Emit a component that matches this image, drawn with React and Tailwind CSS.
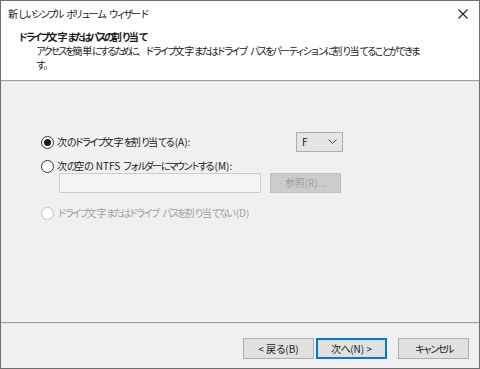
import React from "react";

function cat(ch) {
  if (ch === "ー") return "l";
  if (/[\u3040-\u30ff]/.test(ch)) return "k";
  if (/[\u3000-\u303f\uff00-\uffef]/.test(ch)) return "p";
  if (/[\u4e00-\u9fff]/.test(ch)) return "h";
  return "o";
}

const CLS = {
  k: "tracking-[-2.6px]",
  l: "tracking-[-1.3px]",
  p: "tracking-[-1.8px]",
  h: "tracking-[-0.2px]",
  o: "tracking-[0px]",
  oAfterKana: "ml-[2px] tracking-[0px]",
};

function JP({ children }) {
  const text = String(children);
  const runs = [];
  for (const ch of text) {
    const c = cat(ch);
    const last = runs[runs.length - 1];
    if (last && last.c === c) last.t += ch;
    else runs.push({ c, t: ch });
  }
  return (
    <span className="whitespace-nowrap">
      {runs.map((r, i) => {
        const prev = runs[i - 1];
        const cls =
          r.c === "o" && prev && (prev.c === "k" || prev.c === "l" || prev.c === "p")
            ? CLS.oAfterKana
            : CLS[r.c];
        return (
          <span key={i} className={cls}>
            {r.t}
          </span>
        );
      })}
    </span>
  );
}

function Radio({ checked, disabled }) {
  return (
    <span
      className={`flex h-[13px] w-[13px] shrink-0 items-center justify-center rounded-full border bg-white ${
        disabled ? "border-[#c4c4c4]" : "border-[#333333]"
      }`}
    >
      {checked && <span className="h-[7px] w-[7px] rounded-full bg-[#1a1a1a]" />}
    </span>
  );
}

export default function App() {
  return (
    <div className="flex h-[369px] w-[480px] flex-col border border-[#6e6e6e] bg-[#f0f0f0] font-[family-name:'Noto_Sans_CJK_JP',sans-serif] text-[10px] leading-none text-[#1a1a1a]">
      <div className="flex flex-col bg-white">
        <div className="flex h-[26px] items-center justify-between pl-[7px] pr-[8px]">
          <JP>新しいシンプル ボリューム ウィザード</JP>
          <svg width="10" height="10" viewBox="0 0 10 10" className="mr-[3px]">
            <path d="M0.5 0.5 L9.5 9.5 M9.5 0.5 L0.5 9.5" stroke="#222" strokeWidth="1.1" />
          </svg>
        </div>
        <div className="h-[53px] pl-[17px] pt-[5px]">
          <div className="font-bold">
            <JP>ドライブ文字またはパスの割り当て</JP>
          </div>
          <div className="mt-[2px] pl-[18px] leading-[14px]">
            <JP>アクセスを簡単にするために、ドライブ文字またはドライブ パスをパーティションに割り当てることができま</JP>
            <br />
            <JP>す。</JP>
          </div>
        </div>
      </div>
      <div className="h-[2px] border-t border-[#a0a0a0] bg-[#e3e3e3]" />
      <div className="flex flex-1 flex-col pl-[40px] pt-[50px]">
        <div className="flex h-[20px] w-[302px] items-center justify-between">
          <div className="flex items-center gap-[3px]">
            <Radio checked />
            <JP>次のドライブ文字を割り当てる(A):</JP>
          </div>
          <div className="flex h-[20px] w-[47px] items-center justify-between border border-[#adadad] bg-[#e5e5e5] pl-[5px] pr-[5px]">
            <span>F</span>
            <svg width="9" height="6" viewBox="0 0 9 6">
              <path d="M0.5 0.5 L4.5 4.5 L8.5 0.5" fill="none" stroke="#444" strokeWidth="1" />
            </svg>
          </div>
        </div>
        <div className="mt-[7px] flex h-[14px] items-center gap-[3px]">
          <Radio />
          <JP>次の空の NTFS フォルダーにマウントする(M):</JP>
        </div>
        <div className="flex h-[20px] items-center pl-[18px]">
          <div className="h-[20px] w-[202px] border border-[#cccccc] bg-[#f4f4f4]" />
          <div className="ml-[9px] flex h-[20px] w-[71px] items-center justify-center border border-[#bfbfbf] bg-[#cccccc] text-[#a0a0a0]">
            <JP>参照(R)...</JP>
          </div>
        </div>
        <div className="mt-[13px] flex h-[14px] items-center gap-[3px] text-[#a0a0a0]">
          <Radio disabled />
          <JP>ドライブ文字またはドライブ パスを割り当てない(D)</JP>
        </div>
      </div>
      <div className="h-[2px] border-t border-[#a0a0a0] bg-[#e3e3e3]" />
      <div className="flex h-[44px] items-start justify-end pr-[10px] pt-[14px]">
        <div className="flex h-[21px] w-[71px] items-center justify-center border border-[#adadad] bg-[#e1e1e1]">
          <JP>&lt; 戻る(B)</JP>
        </div>
        <div className="ml-[2px] flex h-[21px] w-[71px] items-center justify-center border-2 border-[#0078d7] bg-[#e1e1e1]">
          <JP>次へ(N) &gt;</JP>
        </div>
        <div className="ml-[11px] flex h-[21px] w-[71px] items-center justify-center border border-[#adadad] bg-[#e1e1e1]">
          <JP>キャンセル</JP>
        </div>
      </div>
    </div>
  );
}
